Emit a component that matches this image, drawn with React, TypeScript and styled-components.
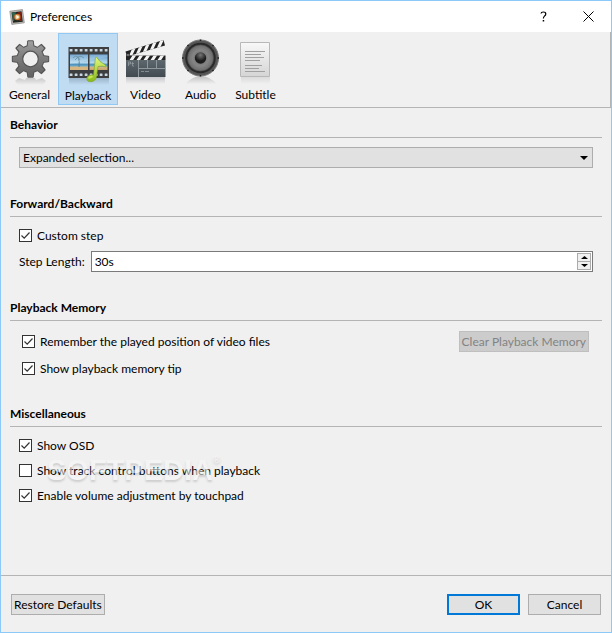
import React, { useState } from 'react';
import styled, { createGlobalStyle, css } from 'styled-components';

const GlobalStyle = createGlobalStyle`
  * { box-sizing: border-box; }
  body {
    margin: 0;
    background: #f0f0f0;
    color: #000;
    font: 12px/16px Lato, "Open Sans", "Noto Sans", sans-serif;
  }
  button, input, select { font: inherit; color: inherit; margin: 0; }
`;

const Window = styled.div`
  display: flex;
  flex-direction: column;
  min-height: 100vh;
  border: 1px solid #8cc8f8;
  background: #f0f0f0;
`;

const TitleBar = styled.header`
  display: flex;
  align-items: center;
  height: 31px;
  padding-left: 8px;
  background: #fff;
`;

const Title = styled.h1`
  flex: 1;
  margin: 0 0 0 5px;
  font-size: 12px;
  font-weight: 400;
`;

const CaptionButton = styled.button`
  display: flex;
  align-items: center;
  justify-content: center;
  width: 45px;
  height: 30px;
  padding: 0;
  border: 0;
  background: none;
`;

const TabBar = styled.nav`
  display: grid;
  grid-template-columns: 57px 60px 55px 55px 55px;
  height: 76px;
  padding: 1px 0 2px;
  border-right: 1px solid #b4b4b4;
  border-bottom: 1px solid #b4b4b4;
`;

const Tab = styled.button<{ $active: boolean }>`
  display: flex;
  flex-direction: column;
  align-items: center;
  gap: 1px;
  padding: 4px 0 0;
  border: 1px solid transparent;
  background: none;
  ${(p) =>
    p.$active &&
    css`
      padding-top: 5px;
      border-color: #90c8f6;
      background: #c0dcf3;
    `}
`;

const Content = styled.main`
  flex: 1;
  padding: 9px 9px 0;
`;

const Section = styled.section`
  margin-bottom: 28px;
`;

const Heading = styled.h2`
  margin: 0;
  padding-bottom: 4px;
  border-bottom: 1px solid #b4b4b4;
  font-size: 12px;
  font-weight: 700;
  line-height: 16px;
`;

const Fields = styled.div<{ $gap: number; $inset?: boolean }>`
  display: flex;
  flex-direction: column;
  gap: ${(p) => p.$gap}px;
  padding: ${(p) => (p.$inset ? '10px 9px 0 12px' : '9px 9px 0')};
`;

const Split = styled.div`
  display: flex;
  align-items: center;
  justify-content: space-between;
  padding-right: 4px;
`;

const SelectWrap = styled.div`
  display: grid;
  align-items: center;
  > * { grid-area: 1 / 1; }
  > svg { justify-self: end; margin-right: 5px; pointer-events: none; }
`;

const Select = styled.select`
  appearance: none;
  width: 100%;
  height: 21px;
  padding: 0 20px 0 3px;
  border: 1px solid #adadad;
  border-radius: 0;
  background: #e1e1e1;
`;

const CheckLabel = styled.label`
  display: flex;
  align-items: center;
  gap: 5px;
  height: 19px;
`;

const CheckBox = styled.span`
  display: grid;
  width: 13px;
  height: 13px;
  > * { grid-area: 1 / 1; }
  > svg { pointer-events: none; visibility: hidden; }
  > input:checked + svg { visibility: visible; }
`;

const CheckInput = styled.input`
  appearance: none;
  width: 13px;
  height: 13px;
  margin: 0;
  border: 1px solid #333;
  background: #fff;
`;

const FieldRow = styled.div`
  display: flex;
  align-items: center;
  gap: 6px;
`;

const SpinBox = styled.div`
  flex: 1;
  display: flex;
  height: 21px;
  padding: 1px;
  border: 1px solid #7a7a7a;
  background: #fff;
`;

const SpinInput = styled.input`
  flex: 1;
  min-width: 0;
  padding: 0 2px;
  border: 0;
  outline: 0;
  background: none;
`;

const SpinButtons = styled.div`
  display: grid;
  grid-template-rows: 9px 8px;
  width: 14px;
`;

const SpinButton = styled.button`
  display: flex;
  align-items: center;
  justify-content: center;
  padding: 0;
  border: 1px solid #acacac;
  background: #f0f0f0;
  & + & { border-top: 0; }
`;

const PushButton = styled.button<{ $primary?: boolean; $wide?: boolean }>`
  height: 21px;
  min-width: ${(p) => (p.$wide ? 73 : 0)}px;
  padding: 0 2px;
  border: ${(p) => (p.$primary ? '2px solid #0078d7' : '1px solid #adadad')};
  background: #e1e1e1;
  line-height: 16px;
  white-space: nowrap;
  &:disabled { border-color: #bfbfbf; background: #ccc; color: #838383; }
`;

const Footer = styled.footer`
  display: flex;
  gap: 8px;
  padding: 18px 10px 17px;
  border-top: 1px solid #b4b4b4;
  > :first-child { margin-right: auto; }
`;

const Watermarked = styled.div`
  position: relative;
`;

const Watermark = styled.span`
  position: absolute;
  left: 37px;
  top: 25px;
  display: flex;
  font: 700 29px/36px "Liberation Sans", Arial, sans-serif;
  color: #f8f8f8;
  opacity: 0.55;
  text-shadow: 0 2px 2px rgba(0, 0, 0, 0.25);
  pointer-events: none;
  > sup { font-size: 10px; line-height: 16px; }
`;

const AppIcon = () => (
  <svg width="16" height="16" viewBox="0 0 16 16" aria-hidden="true">
    <path d="M.8 2.200 13.500.6 15.300 13.800 2.800 15.400Z" fill="#bdb9b5" stroke="#858585" strokeWidth=".7" />
    <path d="M2.500 3.500 12.500 2.300 13.800 12.700 4 13.800Z" fill="#20281f" />
    <path d="M3 4 7 3 5 12 4 12Z" fill="#2d6651" />
    <path d="M9 3 12.300 3 13 12 10 12Z" fill="#7b1e13" />
    <circle cx="8.300" cy="8" r="3.200" fill="#c9682d" />
    <circle cx="8.300" cy="8" r="2.300" fill="#e0b45e" />
    <path d="m7.300 6 3 2-2.800 2Z" fill="#fff" />
  </svg>
);

const teeth = [0, 45, 90, 135, 180, 225, 270, 315];

const GearIcon = () => (
  <svg width="48" height="48" viewBox="0 1 48 48" aria-hidden="true">
    <defs>
      <linearGradient id="gear" x1="0" y1="4" x2="0" y2="41" gradientUnits="userSpaceOnUse">
        <stop offset="0" stopColor="#a0a0a0" />
        <stop offset=".45" stopColor="#7c7c7c" />
        <stop offset="1" stopColor="#606060" />
      </linearGradient>
      <linearGradient id="gearFade" x1="0" y1="0" x2="0" y2="1">
        <stop offset="0" stopColor="#888" stopOpacity=".38" />
        <stop offset="1" stopColor="#888" stopOpacity="0" />
      </linearGradient>
    </defs>
    <path d="M20 41h9l1 2 6-2 4 3-3 4H12l-3-4 4-3 6 2Z" fill="url(#gearFade)" />
    <g fill="#555">
      {teeth.map((a) => (
        <path key={a} d="M20.500 10 21.200 4.300q.2-1 1-1h4.600q.8 0 1 1l.7 5.700Z" transform={`rotate(${a} 24.500 22)`} />
      ))}
      <circle cx="24.500" cy="22" r="14" />
    </g>
    <g fill="url(#gear)">
      <path d="m21.500 10 .7-5.700h4.600l.7 5.700ZM21.500 34l.7 5.700h4.600l.7-5.700ZM12.500 19l-5.700.7v4.600l5.700.7ZM36.500 19l5.700.7v4.600l-5.700.7Z" />
      <path d="m14 15-3.200-3.800 2.900-2.900L18 11ZM35 15l3.200-3.800-2.900-2.900L31 11ZM14 29l-3.200 3.800 2.900 2.900L18 33ZM35 29l3.200 3.800-2.900 2.900L31 33Z" />
      <circle cx="24.500" cy="22" r="13" />
    </g>
    <circle cx="24.500" cy="22" r="7.800" fill="#efefef" stroke="#555" strokeWidth="1.200" />
  </svg>
);

const holes = [6.2, 11.2, 16.2, 21.2, 26.2, 31.2, 36.2, 41.2];

const FilmIcon = () => (
  <svg width="48" height="48" viewBox="0 0 48 48" aria-hidden="true">
    <defs>
      <linearGradient id="sky" x1="0" y1="0" x2="0" y2="1">
        <stop offset="0" stopColor="#5b96c8" />
        <stop offset=".55" stopColor="#b5dbef" />
        <stop offset=".62" stopColor="#4d8fbd" />
        <stop offset=".75" stopColor="#6aa9c6" />
        <stop offset=".8" stopColor="#d5ba8a" />
        <stop offset="1" stopColor="#c9a26a" />
      </linearGradient>
      <linearGradient id="note" x1="0" y1="0" x2="0" y2="1">
        <stop offset="0" stopColor="#e4f97c" />
        <stop offset="1" stopColor="#88b91c" />
      </linearGradient>
      <linearGradient id="filmFade" x1="0" y1="0" x2="0" y2="1">
        <stop offset="0" stopColor="#456" stopOpacity=".3" />
        <stop offset="1" stopColor="#456" stopOpacity="0" />
      </linearGradient>
    </defs>
    <path d="M5 39h40v7H5Z" fill="url(#filmFade)" />
    <path d="M4.500 8h40.500v31H4.500Z" fill="#3c3e40" />
    {holes.map((x) => (
      <g key={x} fill="#c9d6df">
        <rect x={x - 0.5} y="10" width="2.800" height="2.600" rx=".5" />
        <rect x={x - 0.5} y="34.500" width="2.800" height="2.600" rx=".5" />
      </g>
    ))}
    <path d="M6 15.500h18V31H6Z" fill="url(#sky)" />
    <path d="M25.500 15.500H43.500V31H25.500Z" fill="url(#sky)" />
    <path d="M6 28.500q8-2 18 1V31H6Z" fill="#d8b681" />
    <path d="M15 28q1-6-1-10M14 18q-3-2-5 1m5-1q3-2 6 1m-6-1 2 3m-2-3-3 3" fill="none" stroke="#4f7d94" strokeWidth=".9" />
    <path d="M6 15.500h18v6L6 25ZM25.500 15.500H43.500v2.500l-18 3Z" fill="#fff" opacity=".18" />
    <path d="M31.500 18.500q.5-1 1.300 0 2 4 8.700 7.500l.5 2q-4-1.500-8-.5L32.400 38q-.8 4.400-5.400 4.700-4.200.1-4.200-2.700 0-3.600 5-4.200 1 0 1.700.3Z" fill="url(#note)" stroke="#7da520" strokeWidth=".6" />
    <ellipse cx="26.500" cy="38.200" rx="2.500" ry="1.200" fill="#d0ef57" opacity=".8" transform="rotate(-20 26.500 38.200)" />
  </svg>
);

const ClapperIcon = () => (
  <svg width="48" height="48" viewBox="0 1 48 48" aria-hidden="true">
    <defs>
      <linearGradient id="slate" x1="0" y1="0" x2="0" y2="1">
        <stop offset="0" stopColor="#5d676e" />
        <stop offset="1" stopColor="#414a50" />
      </linearGradient>
      <linearGradient id="slateFade" x1="0" y1="0" x2="0" y2="1">
        <stop offset="0" stopColor="#667" stopOpacity=".3" />
        <stop offset="1" stopColor="#667" stopOpacity="0" />
      </linearGradient>
      <clipPath id="arm"><path d="M3.500 14.500 41.500 3 43 8.500 5 19.500Z" /></clipPath>
      <clipPath id="bar"><path d="M4 18.500h39.500v4.500H4Z" /></clipPath>
    </defs>
    <path d="M4 40h39v7H4Z" fill="url(#slateFade)" />
    <g clipPath="url(#arm)">
      <path d="M2 0h44v24H2Z" fill="#222" />
      <path d="m8 20 5-11M15 18l5-11M22 16l5-11M29 14l5-11M36 12l5-11" stroke="#f3f3f3" strokeWidth="3" />
    </g>
    <g clipPath="url(#bar)">
      <path d="M4 17h40v7H4Z" fill="#222" />
      <path d="m8 25 6-9m1 9 6-9m1 9 6-9m1 9 6-9m1 9 6-9" stroke="#f3f3f3" strokeWidth="3" />
    </g>
    <path d="M4 23h39.500v17H4Z" fill="url(#slate)" />
    <path d="M16.500 23v17M17 31.500h26.500M25.500 23v8M34.500 23v8" stroke="#8d979c" strokeWidth="1" fill="none" />
    <path d="M6.500 29v-4h2v2h-2M10.500 25v4h1.500M9.500 26.500H12M19 34.500h3m1 0h4" stroke="#8f999e" strokeWidth=".8" fill="none" />
    <circle cx="6" cy="18" r="1.800" fill="#333" />
    <circle cx="6" cy="18" r=".7" fill="#ddd" />
  </svg>
);

const SpeakerIcon = () => (
  <svg width="48" height="48" viewBox="0 1 48 48" aria-hidden="true">
    <defs>
      <radialGradient id="cone">
        <stop offset="0" stopColor="#5a5a5a" />
        <stop offset=".6" stopColor="#858585" />
        <stop offset="1" stopColor="#6b6b6b" />
      </radialGradient>
      <radialGradient id="dome" cx=".5" cy=".25">
        <stop offset="0" stopColor="#777" />
        <stop offset="1" stopColor="#1c1c1c" />
      </radialGradient>
      <linearGradient id="speakerFade" x1="0" y1="0" x2="0" y2="1">
        <stop offset="0" stopColor="#777" stopOpacity=".4" />
        <stop offset="1" stopColor="#777" stopOpacity="0" />
      </linearGradient>
    </defs>
    <path d="M8 47q8-8 16-8t16 8Z" fill="url(#speakerFade)" />
    <circle cx="23.500" cy="21" r="18" fill="#555" stroke="#7d7d7d" strokeWidth="1" />
    <path d="M23.500 2.500v1.500M23.500 38v1.500M5 21h1.500M40.500 21h1.500M10.500 8l1 1M36.500 8l-1 1M10.500 34l1-1M36.500 34l-1-1" stroke="#222" strokeWidth="1.500" />
    <circle cx="23.500" cy="21" r="15.300" fill="#2a2a2a" />
    <circle cx="23.500" cy="21" r="13" fill="url(#cone)" stroke="#555" strokeWidth=".6" />
    <circle cx="23.500" cy="21" r="5.700" fill="url(#dome)" />
  </svg>
);

const PageIcon = () => (
  <svg width="48" height="48" viewBox="0 1 48 48" aria-hidden="true">
    <defs>
      <linearGradient id="page" x1="0" y1="0" x2="0" y2="1">
        <stop offset="0" stopColor="#f8f8f8" />
        <stop offset="1" stopColor="#d5d5d5" />
      </linearGradient>
      <linearGradient id="pageFade" x1="0" y1="0" x2="0" y2="1">
        <stop offset="0" stopColor="#bbb" stopOpacity=".4" />
        <stop offset="1" stopColor="#bbb" stopOpacity="0" />
      </linearGradient>
    </defs>
    <path d="M9 40h29v7H9Z" fill="url(#pageFade)" />
    <path d="M8.500 5.500h29v34h-29Z" fill="url(#page)" stroke="#b8b8b8" />
    <path d="M13 14.500h20M13 17.500h16M13 20.500h19M13 23.500h15M13 28.500h17M13 31.500h14M13 34.500h20" stroke="#a0a0a0" strokeWidth="1" />
  </svg>
);

const Triangle = ({ up, size = 7 }: { up?: boolean; size?: number }) => (
  <svg width={size} height={size === 8 ? 4 : 3} viewBox="0 0 8 4" preserveAspectRatio="none" aria-hidden="true">
    <path d={up ? 'M0 4 4 0 8 4Z' : 'M0 0h8L4 4Z'} fill="#000" />
  </svg>
);

const Check = ({ label, initial = true }: { label: string; initial?: boolean }) => (
  <CheckLabel>
    <CheckBox>
      <CheckInput type="checkbox" defaultChecked={initial} />
      <svg width="13" height="13" viewBox="0 0 13 13" aria-hidden="true">
        <path d="m2.500 6.500 2.700 2.700 5.300-5.700" fill="none" stroke="#333" strokeWidth="1.200" />
      </svg>
    </CheckBox>
    {label}
  </CheckLabel>
);

const tabs = [
  { name: 'General', Icon: GearIcon },
  { name: 'Playback', Icon: FilmIcon },
  { name: 'Video', Icon: ClapperIcon },
  { name: 'Audio', Icon: SpeakerIcon },
  { name: 'Subtitle', Icon: PageIcon },
];

export default function App() {
  const [active, setActive] = useState('Playback');
  const [step, setStep] = useState(30);

  return (
    <>
      <GlobalStyle />
      <Window>
        <TitleBar>
          <AppIcon />
          <Title>Preferences</Title>
          <CaptionButton aria-label="Help">
            <svg width="7" height="11" viewBox="0 0 7 11" aria-hidden="true">
              <path d="M1 2.500Q1.200 1 3.300 1 5.800 1 5.800 3q0 1.200-1.300 2.100Q3.400 6 3.400 7.500" fill="none" stroke="#000" strokeWidth="1.200" />
              <path d="M2.700 9h1.500v1.500H2.700Z" />
            </svg>
          </CaptionButton>
          <CaptionButton aria-label="Close">
            <svg width="11" height="11" viewBox="0 0 11 11" aria-hidden="true">
              <path d="m.5.5 10 10m0-10-10 10" stroke="#000" strokeWidth="1" />
            </svg>
          </CaptionButton>
        </TitleBar>

        <TabBar>
          {tabs.map(({ name, Icon }) => (
            <Tab key={name} $active={name === active} onClick={() => setActive(name)}>
              <Icon />
              {name}
            </Tab>
          ))}
        </TabBar>

        <Content>
          <Section>
            <Heading>Behavior</Heading>
            <Fields $gap={0}>
              <SelectWrap>
                <Select aria-label="Behavior">
                  <option>Expanded selection...</option>
                </Select>
                <Triangle size={8} />
              </SelectWrap>
            </Fields>
          </Section>

          <Section>
            <Heading>Forward/Backward</Heading>
            <Fields $gap={6}>
              <Check label="Custom step" />
              <FieldRow>
                <label htmlFor="step">Step Length:</label>
                <SpinBox>
                  <SpinInput
                    id="step"
                    value={`${step}s`}
                    onChange={(e) => setStep(parseInt(e.target.value, 10) || 0)}
                  />
                  <SpinButtons>
                    <SpinButton aria-label="Increase" onClick={() => setStep(step + 1)}>
                      <Triangle up />
                    </SpinButton>
                    <SpinButton aria-label="Decrease" onClick={() => setStep(Math.max(0, step - 1))}>
                      <Triangle />
                    </SpinButton>
                  </SpinButtons>
                </SpinBox>
              </FieldRow>
            </Fields>
          </Section>

          <Section>
            <Heading>Playback Memory</Heading>
            <Fields $gap={7} $inset>
              <Split>
                <Check label="Remember the played position of video files" />
                <PushButton disabled>Clear Playback Memory</PushButton>
              </Split>
              <Check label="Show playback memory tip" />
            </Fields>
          </Section>

          <Section>
            <Heading>Miscellaneous</Heading>
            <Watermarked>
              <Fields $gap={6}>
                <Check label="Show OSD" />
                <Check label="Show track control buttons when playback" initial={false} />
                <Check label="Enable volume adjustment by touchpad" />
              </Fields>
              <Watermark>
                SOFTPEDIA<sup>®</sup>
              </Watermark>
            </Watermarked>
          </Section>
        </Content>

        <Footer>
          <PushButton>Restore Defaults</PushButton>
          <PushButton $primary $wide>OK</PushButton>
          <PushButton $wide>Cancel</PushButton>
        </Footer>
      </Window>
    </>
  );
}
